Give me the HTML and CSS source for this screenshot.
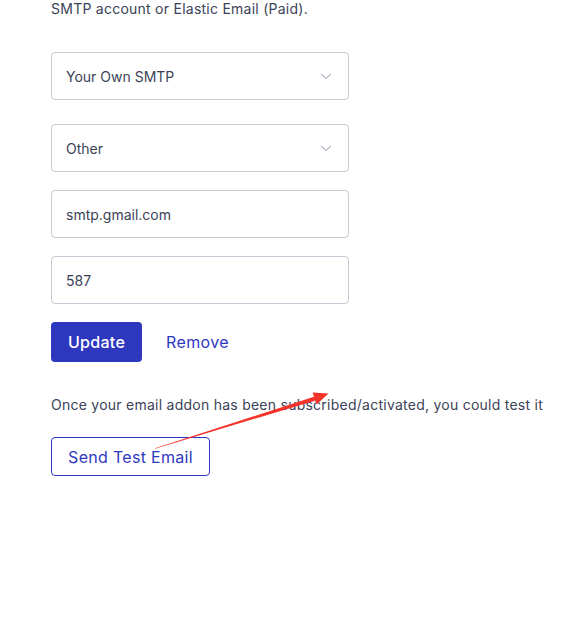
FILE: index.html
```html
<!DOCTYPE html>
<html>
<head>
<meta charset="utf-8">
<link rel="stylesheet" href="styles.css">
</head>
<body>
<div class="page">
  <p class="intro">SMTP account or Elastic Email (Paid).</p>
  <div class="field select first">
    <span>Your Own SMTP</span>
    <svg class="chev" width="12" height="7" viewBox="0 0 12 7"><path d="M1 1l5 4.5L11 1" fill="none" stroke="#b9bcc8" stroke-width="1.3"/></svg>
  </div>
  <div class="field select second">
    <span>Other</span>
    <svg class="chev" width="12" height="7" viewBox="0 0 12 7"><path d="M1 1l5 4.5L11 1" fill="none" stroke="#b9bcc8" stroke-width="1.3"/></svg>
  </div>
  <div class="field input">smtp.gmail.com</div>
  <div class="field input">587</div>
  <div class="actions">
    <button class="btn-primary">Update</button>
    <a class="link">Remove</a>
  </div>
  <p class="note">Once your email addon has been subscribed/activated, you could test it</p>
  <button class="btn-outline">Send Test Email</button>
</div>
<svg class="arrow" width="563" height="619" viewBox="0 0 563 619">
  <polygon points="155,448.3 314.6,396.6 315.8,400.4 155,448.7" fill="#f4332a"/>
  <polygon points="328.5,393.6 312.6,392.6 316.6,404.6" fill="#f4332a"/>
</svg>
</body>
</html>
```
FILE: styles.css
```css
html, body {
  margin: 0;
  padding: 0;
  background: #ffffff;
  overflow: hidden;
}
body {
  width: 563px;
  height: 619px;
  position: relative;
  font-family: "Inter", "Open Sans", sans-serif;
  color: #3b4357;
}
.page {
  padding-left: 51px;
  display: flex;
  flex-direction: column;
  align-items: flex-start;
}
.intro {
  margin: -1px 0 0 0;
  font-size: 14px;
  line-height: 20px;
  letter-spacing: 0.25px;
  white-space: nowrap;
}
.field {
  box-sizing: border-box;
  width: 298px;
  height: 48px;
  border: 1px solid #c9c9d6;
  border-radius: 4px;
  padding: 0 15px 0 14px;
  display: flex;
  align-items: center;
  justify-content: space-between;
  font-size: 14px;
  color: #3b4357;
}
.select.first { margin-top: 33px; }
.select.second { margin-top: 24px; }
.input { margin-top: 18px; }
.chev { margin-right: 1px; }
.actions {
  margin-top: 18px;
  display: flex;
  align-items: center;
  gap: 24px;
}
.btn-primary {
  width: 91px;
  height: 40px;
  border: none;
  border-radius: 4px;
  background: #2e38bf;
  color: #ffffff;
  font-family: inherit;
  font-size: 16px;
  font-weight: 500;
  letter-spacing: 0.3px;
  padding: 0;
}
.link {
  color: #2e38bf;
  font-size: 16px;
  letter-spacing: 0.4px;
}
.note {
  margin: 33px 0 0 0;
  font-size: 14px;
  line-height: 20px;
  letter-spacing: 0.25px;
  white-space: nowrap;
}
.btn-outline {
  margin-top: 22px;
  width: 159px;
  height: 39px;
  border: 1px solid #2e38bf;
  border-radius: 4px;
  background: #ffffff;
  color: #2e38bf;
  font-family: inherit;
  font-size: 16px;
  letter-spacing: 0.3px;
  padding: 0;
}
.arrow {
  position: absolute;
  left: 0;
  top: 0;
  pointer-events: none;
}
```
